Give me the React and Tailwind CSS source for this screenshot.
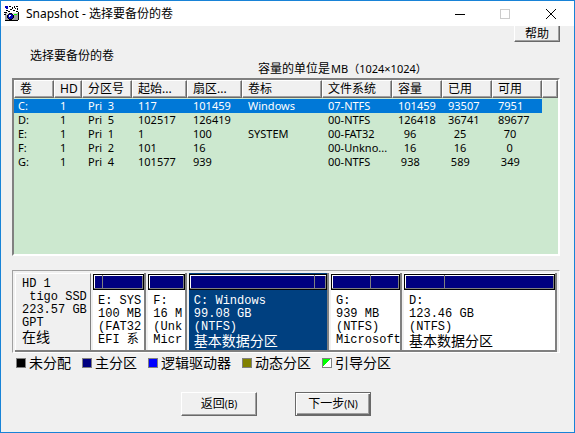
import clsx from 'clsx';

const columns = [
    { label: '卷', width: 'w-[40px]' },
    { label: 'HD', width: 'w-[28px]' },
    { label: '分区号', width: 'w-[50px]' },
    { label: '起始...', width: 'w-[55px]' },
    { label: '扇区...', width: 'w-[55px]' },
    { label: '卷标', width: 'w-[80px]' },
    { label: '文件系统', width: 'w-[70px]' },
    { label: '容量', width: 'w-[50px]' },
    { label: '已用', width: 'w-[50px]' },
    { label: '可用', width: 'w-[50px]' },
];

const volumes = [
    ['C:', '1', 'Pri  3', '117', '101459', 'Windows', '07-NTFS', '101459', '93507', '7951'],
    ['D:', '1', 'Pri  5', '102517', '126419', '', '00-NTFS', '126418', '36741', '89677'],
    ['E:', '1', 'Pri  1', '1', '100', 'SYSTEM', '00-FAT32', '  96', '  25', '  70'],
    ['F:', '1', 'Pri  2', '101', '16', '', '00-Unkno...', '  16', '  16', '   0'],
    ['G:', '1', 'Pri  4', '101577', '939', '', '00-NTFS', ' 938', ' 589', ' 349'],
];

// grow is the share of the strip, used the filled part of the bar in percent
const partitions = [
    { name: 'E: SYS', size: '100 MB', fs: '(FAT32', type: 'EFI 系', grow: 52, used: 18 },
    { name: 'F:', size: '16 M', fs: '(Unk', type: 'Micr', grow: 37, used: 100 },
    { name: 'C: Windows', size: '99.08 GB', fs: '(NTFS)', type: '基本数据分区', grow: 140, used: 92, selected: true },
    { name: 'G:', size: '939 MB', fs: '(NTFS)', type: 'Microsoft', grow: 70, used: 58 },
    { name: 'D:', size: '123.46 GB', fs: '(NTFS)', type: '基本数据分区', grow: 153, used: 27 },
];

const legend = [
    { label: '未分配', color: 'bg-black' },
    { label: '主分区', color: 'bg-[#000080]' },
    { label: '逻辑驱动器', color: 'bg-[#0000ff]' },
    { label: '动态分区', color: 'bg-[#808000]' },
    { label: '引导分区', color: 'bg-linear-to-br from-[#00ff00] from-50% to-white to-50%' },
];

const raised = 'border border-t-white border-l-white border-r-[#696969] border-b-[#696969] shadow-[inset_-1px_-1px_0_#a0a0a0]';

function AppIcon() {
    return (
        <svg width="16" height="16" viewBox="0 0 16 16" shapeRendering="crispEdges" aria-hidden="true">
            <path d="M1 7h13v7H1z" fill="#a0a0a0" />
            <path d="M2 7h11v2H2z" fill="#d8d8d8" />
            <path d="M0 6h3v1H0zM0 8h2v1H0zM1 14h13v1H1zM14 6h1v8h-1zM5 0h2v1H5zM8 1h1v2H8zM10 0h1v2h-1zM12 0h2v1h-2zM13 2h1v2h-1zM6 3h2v1H6zM9 4h2v1H9zM4 5h2v1H4zM11 2h1v1h-1zM12 5h2v1h-2zM2 4h2v1H2z" fill="#000" />
            <path d="M1 0h3v2H1zM2 2h2v1H2z" fill="#0000c0" />
            <path d="M5 7h3v1H5zM4 8h1v1H4zM8 8h1v1H8zM3 9h1v3H3zM9 9h1v3H9zM4 12h1v1H4zM8 12h1v1H8zM5 13h3v1H5z" fill="#000" />
            <path d="M5 8h3v5H5zM4 9h5v3H4z" fill="#0000c0" />
            <path d="M5 9h2v1H5zM5 10h1v1H5z" fill="#fff" />
            <path d="M10 8h3v1h-3z" fill="#00ff00" />
        </svg>
    );
}

function TitleBar() {
    return (
        <header className="flex h-[25px] items-center bg-white pl-[3px]">
            <AppIcon />
            <h1 className="ml-[6px] flex-1 text-[12px]">Snapshot - 选择要备份的卷</h1>
            <button aria-label="Minimize" className="flex h-[25px] w-[45px] items-center justify-center">
                <svg width="10" height="10" stroke="#000" shapeRendering="crispEdges"><path d="M0 5.5h10" /></svg>
            </button>
            <button aria-label="Maximize" disabled className="flex h-[25px] w-[45px] items-center justify-center">
                <svg width="10" height="10" fill="none" stroke="#ccc" shapeRendering="crispEdges"><path d="M.5.5h9v9h-9z" /></svg>
            </button>
            <button aria-label="Close" className="flex h-[25px] w-[47px] items-center justify-center">
                <svg width="10" height="10" stroke="#000"><path d="M0 0l10 10M10 0L0 10" /></svg>
            </button>
        </header>
    );
}

function VolumeTable() {
    return (
        <div className="h-[178px] overflow-hidden border-2 border-t-[#808080] border-l-[#808080] border-r-white border-b-white bg-[#cce8cf]">
            <table className="w-full table-fixed border-separate border-spacing-0 text-left">
                <thead>
                    <tr>
                        {columns.map((col) => (
                            <th key={col.label} className={clsx(col.width, raised, 'h-[18px] truncate bg-[#f0f0f0] pl-[5px] text-[12px] leading-4 font-normal')}>
                                {col.label}
                            </th>
                        ))}
                        <th className={clsx(raised, 'bg-[#f0f0f0]')}></th>
                    </tr>
                </thead>
                <tbody className="text-[11px] leading-[14px] before:block before:h-px">
                    {volumes.map((row, i) => (
                        <tr key={row[0]} className={clsx(i === 0 && 'text-white')}>
                            {row.map((cell, j) => (
                                <td key={j} className={clsx('h-[14px] whitespace-pre', j === 0 ? 'pl-1' : 'pl-[6px]', i === 0 && 'bg-[#0078d7]')}>
                                    {cell}
                                </td>
                            ))}
                            <td></td>
                        </tr>
                    ))}
                </tbody>
            </table>
        </div>
    );
}

function Partition({ part }) {
    return (
        <button
            className={clsx(
                'mr-[2px] min-w-0 basis-0 overflow-hidden border-r-2 border-[#808080] text-left last:mr-0',
                part.selected ? 'bg-[#004080] text-white' : 'bg-white'
            )}
            style={{ flexGrow: part.grow }}
        >
            <span className="flex h-4 border border-black bg-[#000080] shadow-[inset_1px_1px_0_#fff,inset_-1px_-1px_0_#808080]">
                <span className="block border-r border-b border-[#808080]" style={{ width: `${part.used}%` }}></span>
            </span>
            <span className="block h-[60px] pt-[5px] pl-[5px] leading-[13px] whitespace-pre">
                <span className="block">{part.name}</span>
                <span className="block">{part.size}</span>
                <span className="block">{part.fs}</span>
                <span className={clsx('block', part.type.startsWith('基') && 'text-[14px] leading-4')}>{part.type}</span>
            </span>
        </button>
    );
}

function DiskMap() {
    return (
        <section className="mt-[14px] flex h-[83px] border border-t-[#a0a0a0] border-l-[#a0a0a0] border-r-white border-b-white px-[2px] pt-[2px] font-['Liberation_Mono','Noto_Sans_CJK_SC',monospace] text-[12px]">
            <div className="flex w-full border-b-2 border-[#808080]">
                <div className="mr-[2px] w-[76px] shrink-0 border-t border-r border-l border-t-white border-l-white border-r-[#808080] pt-1 pl-[6px] leading-[13px] whitespace-pre">
                    <div>HD 1</div>
                    <div> tigo SSD</div>
                    <div>223.57 GB</div>
                    <div>GPT</div>
                    <div className="text-[14px] leading-4">在线</div>
                </div>
                {partitions.map((part) => (
                    <Partition key={part.name} part={part} />
                ))}
            </div>
        </section>
    );
}

export default function App() {
    return (
        <div className="flex min-h-screen flex-col border border-[#1883d7] bg-[#f0f0f0] font-['Noto_Sans','Noto_Sans_CJK_SC',sans-serif] text-black">
            <TitleBar />
            <main className="flex flex-1 flex-col pr-[14px] pl-[11px]">
                <div className="flex h-[52px] items-start text-[12px] leading-4">
                    <p className="mt-[22px] ml-[18px] w-[228px]">选择要备份的卷</p>
                    <p className="mt-[35px] flex-1 whitespace-nowrap">
                        容量的单位是<span className="ml-px text-[11px]">MB（1024×1024）</span>
                    </p>
                    <button className={clsx(raised, 'h-4 w-[46px] border-t-0 leading-4')}>帮助</button>
                </div>
                <VolumeTable />
                <DiskMap />
                <ul className="mt-px ml-1 flex gap-[11px] text-[14px] leading-[18px]">
                    {legend.map((item) => (
                        <li key={item.label} className="flex items-center gap-[3px]">
                            <span className={clsx('size-[10px] border border-[#808080]', item.color)}></span>
                            {item.label}
                        </li>
                    ))}
                </ul>
                <footer className="mt-5 mr-5 flex justify-center gap-[38px] text-[12px]">
                    <button className={clsx(raised, 'h-6 w-[76px]')}>
                        返回<span className="text-[10px]">(B)</span>
                    </button>
                    <button className="h-6 w-[76px] border border-[#696969] shadow-[inset_1px_1px_0_#fff,inset_-1px_-1px_0_#696969,inset_-2px_-2px_0_#a0a0a0]">
                        下一步<span className="text-[10px]">(N)</span>
                    </button>
                </footer>
            </main>
        </div>
    );
}
